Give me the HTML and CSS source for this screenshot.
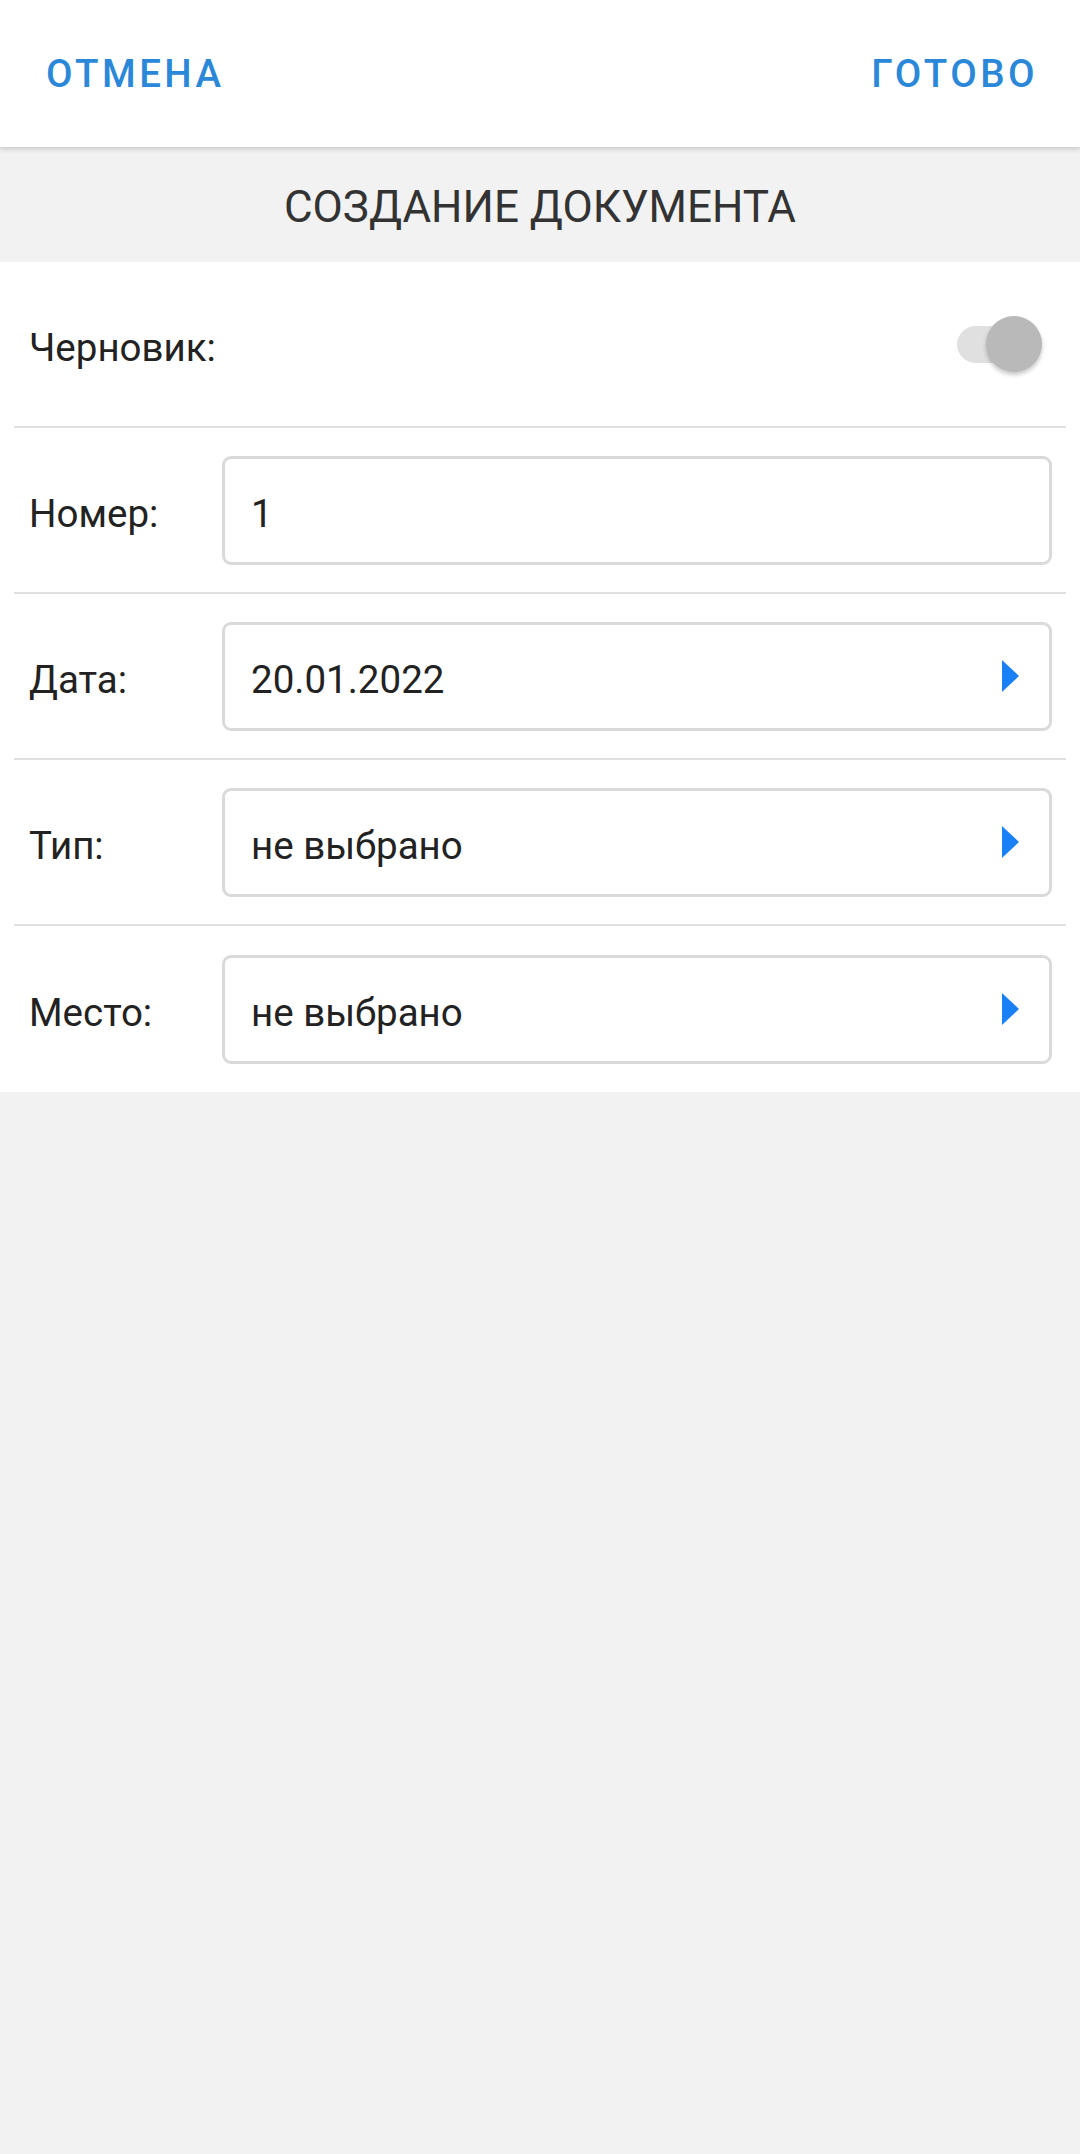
FILE: index.html
```html
<!DOCTYPE html>
<html lang="ru">
<head>
<meta charset="utf-8">
<title>Создание документа</title>
<link rel="stylesheet" href="styles.css">
</head>
<body>
<header class="topbar">
  <span class="topbtn">ОТМЕНА</span>
  <span class="topbtn">ГОТОВО</span>
</header>
<div class="titleband">СОЗДАНИЕ ДОКУМЕНТА</div>
<main class="form">
  <div class="row">
    <span class="label">Черновик:</span>
    <div class="switch"><span class="track"></span><span class="thumb"></span></div>
  </div>
  <div class="row">
    <span class="label">Номер:</span>
    <div class="field"><span class="value">1</span></div>
  </div>
  <div class="row">
    <span class="label">Дата:</span>
    <div class="field"><span class="value">20.01.2022</span><svg class="arrow" viewBox="0 0 17 32"><polygon points="0,0 17,16 0,32" fill="#1a80f5"/></svg></div>
  </div>
  <div class="row">
    <span class="label">Тип:</span>
    <div class="field"><span class="value">не выбрано</span><svg class="arrow" viewBox="0 0 17 32"><polygon points="0,0 17,16 0,32" fill="#1a80f5"/></svg></div>
  </div>
  <div class="row">
    <span class="label">Место:</span>
    <div class="field"><span class="value">не выбрано</span><svg class="arrow" viewBox="0 0 17 32"><polygon points="0,0 17,16 0,32" fill="#1a80f5"/></svg></div>
  </div>
</main>
</body>
</html>
```
FILE: styles.css
```css
html, body {
  margin: 0;
  padding: 0;
}
body {
  background: #f2f2f2;
  font-family: Roboto, "Noto Sans", sans-serif;
  min-height: 2154px;
}
.topbar {
  height: 147px;
  background: #ffffff;
  box-shadow: 0 2px 5px rgba(0, 0, 0, 0.18);
  display: flex;
  align-items: center;
  justify-content: space-between;
  padding: 0 42px 0 46px;
  position: relative;
  z-index: 1;
}
.topbtn {
  color: #2b88d9;
  font-size: 38.5px;
  font-weight: 500;
  letter-spacing: 0.09em;
  line-height: 46px;
}
.titleband {
  height: 115px;
  box-sizing: border-box;
  padding-top: 34px;
  text-align: center;
  font-size: 44px;
  line-height: 52px;
  color: #333333;
}
.form {
  background: #ffffff;
  padding: 0 14px;
}
.row {
  height: 166px;
  box-sizing: border-box;
  display: grid;
  grid-template-columns: 208px 1fr;
  align-items: center;
  padding-right: 14px;
  border-bottom: 2px solid #e0e0e0;
}
.row:last-child {
  border-bottom: none;
}
.label {
  padding-left: 15px;
  padding-top: 8px;
  font-size: 38.5px;
  color: #222222;
  line-height: 46px;
}
.field {
  height: 109px;
  box-sizing: border-box;
  border: 3px solid #dadada;
  border-radius: 9px;
  display: flex;
  align-items: center;
  justify-content: space-between;
  padding: 0 30px 0 26px;
}
.value {
  padding-top: 8px;
  font-size: 38.5px;
  color: #222222;
  line-height: 46px;
}
.arrow {
  width: 17px;
  height: 32px;
  display: block;
}
.switch {
  justify-self: end;
  width: 89px;
  height: 56px;
  margin-right: 6px;
  position: relative;
}
.track {
  position: absolute;
  left: 0;
  top: 10px;
  width: 85px;
  height: 37px;
  border-radius: 19px;
  background: #e0e0e0;
}
.thumb {
  position: absolute;
  right: 4px;
  top: 0;
  width: 56px;
  height: 56px;
  border-radius: 50%;
  background: #b9b9b9;
  box-shadow: 0 3px 4px rgba(0, 0, 0, 0.22);
}
```
